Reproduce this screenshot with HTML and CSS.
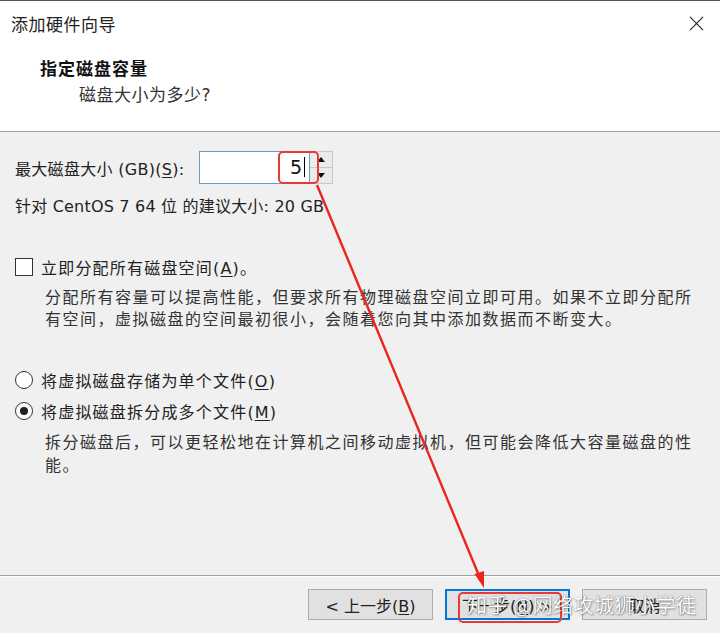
FILE: index.html
```html
<!DOCTYPE html>
<html lang="zh-CN">
<head>
    <meta charset="UTF-8">
    <title>添加硬件向导</title>
    <link rel="stylesheet" href="styles.css">
</head>
<body>
    <div class="window">
        <div class="titlebar">
            <span class="title">添加硬件向导</span>
            <svg class="close" width="16" height="16" viewBox="0 0 16 16">
                <path d="M1 1 L15 15 M15 1 L1 15" stroke="#222" stroke-width="1.2" fill="none"/>
            </svg>
        </div>
        <div class="header">
            <h1>指定磁盘容量</h1>
            <p>磁盘大小为多少?</p>
        </div>
        <div class="content">
            <div class="size_row">
                <label>最大磁盘大小 (GB)(<u>S</u>):</label>
                <div class="spin">
                    <div class="spin_input">5<span class="caret"></span></div>
                    <div class="spin_btns">
                        <div class="spin_btn"><span class="tri_up"></span></div>
                        <div class="spin_btn"><span class="tri_down"></span></div>
                    </div>
                </div>
            </div>
            <p class="recommend">针对 CentOS 7 64 位 的建议大小: 20 GB</p>
            <div class="option check_row">
                <span class="checkbox"></span>
                <span>立即分配所有磁盘空间(<u>A</u>)。</span>
            </div>
            <p class="desc">分配所有容量可以提高性能，但要求所有物理磁盘空间立即可用。如果不立即分配所有空间，虚拟磁盘的空间最初很小，会随着您向其中添加数据而不断变大。</p>
            <div class="option radio_first">
                <span class="radio"></span>
                <span>将虚拟磁盘存储为单个文件(<u>O</u>)</span>
            </div>
            <div class="option radio_second">
                <span class="radio checked"></span>
                <span>将虚拟磁盘拆分成多个文件(<u>M</u>)</span>
            </div>
            <p class="desc desc2">拆分磁盘后，可以更轻松地在计算机之间移动虚拟机，但可能会降低大容量磁盘的性能。</p>
        </div>
        <div class="footer">
            <button class="btn">&lt; 上一步(<u>B</u>)</button>
            <button class="btn btn_default">下一步(<u>N</u>) &gt;</button>
            <button class="btn">取消</button>
        </div>
    </div>

    <!-- 标注 -->
    <div class="mark mark_input"></div>
    <div class="mark mark_next"></div>
    <svg class="arrow" width="720" height="633" viewBox="0 0 720 633">
        <line x1="317" y1="185" x2="480" y2="578" stroke="#e8261c" stroke-width="2.4"/>
        <polygon points="484,588 474.5,574 484,571" fill="#e8261c"/>
    </svg>
    <div class="watermark">知乎 @网络攻城狮小学徒</div>
</body>
</html>
```

FILE: styles.css
```css
*{
    box-sizing: border-box;
}
body{
    margin: 0;
    width: 720px;
    height: 633px;
    overflow: hidden;
    position: relative;
    font-family: "DejaVu Sans", "Noto Sans CJK SC", sans-serif;
    font-size: 16px;
    color: #222;
    background-color: #f0f0f0;
}
u{
    text-decoration: underline;
    text-underline-offset: 2px;
}
.window{
    height: 633px;
    display: flex;
    flex-direction: column;
    border-top: 1px solid #555;
}
.titlebar{
    height: 45px;
    background-color: #fff;
    display: flex;
    align-items: center;
    justify-content: space-between;
    padding: 0 16px 0 11px;
}
.title{
    font-family: "Noto Sans CJK SC", sans-serif;
    font-size: 17px;
    letter-spacing: 0.5px;
    color: #222;
}
.close{
    width: 15px;
    height: 15px;
}
.header{
    height: 86px;
    background-color: #fff;
    border-bottom: 1px solid #a0a0a0;
    padding: 10px 0 0 40px;
}
.header h1{
    margin: 0;
    font-family: "Noto Sans CJK SC", sans-serif;
    font-size: 17px;
    line-height: 24px;
    font-weight: bold;
    letter-spacing: 1px;
    color: #111;
}
.header p{
    margin: 3px 0 0 39px;
    font-size: 17px;
    line-height: 24px;
    letter-spacing: 0.5px;
    color: #333;
}
.content{
    flex: 1;
    padding: 19px 0 0 15px;
}
.size_row{
    display: flex;
    align-items: center;
    height: 33px;
}
.size_row label{
    width: 184px;
    letter-spacing: 0.3px;
}
.spin{
    display: flex;
    height: 33px;
}
.spin_input{
    width: 111px;
    height: 33px;
    background-color: #fff;
    border: 1px solid #6f98c4;
    text-align: right;
    padding-right: 4px;
    line-height: 31px;
    font-size: 19px;
    color: #111;
}
.caret{
    display: inline-block;
    width: 1px;
    height: 20px;
    background-color: #000;
    margin-left: 2px;
    vertical-align: -3px;
}
.spin_btns{
    width: 23px;
    display: flex;
    flex-direction: column;
    border: 1px solid #c8c8c8;
    border-left: none;
}
.spin_btn{
    flex: 1;
    background-color: #ebebeb;
    display: flex;
    align-items: center;
    justify-content: center;
}
.spin_btn + .spin_btn{
    border-top: 1px solid #c8c8c8;
}
.tri_up{
    border: 4px solid transparent;
    border-bottom: 5px solid #111;
    border-top: none;
}
.tri_down{
    border: 4px solid transparent;
    border-top: 5px solid #111;
    border-bottom: none;
}
.recommend{
    margin: 12px 0 0;
    line-height: 22px;
    letter-spacing: 0.2px;
}
.option{
    display: flex;
    align-items: center;
    height: 22px;
    letter-spacing: 1.2px;
}
.check_row{
    margin-top: 38px;
}
.checkbox{
    width: 18px;
    height: 18px;
    border: 1px solid #333;
    background-color: #fff;
    margin-right: 8px;
}
.desc{
    margin: 9px 0 0 30px;
    width: 656px;
    line-height: 22px;
    letter-spacing: 1.5px;
    color: #333;
}
.radio_first{
    margin-top: 38px;
}
.radio_second{
    margin-top: 9px;
}
.radio{
    width: 18px;
    height: 18px;
    border: 1px solid #333;
    border-radius: 50%;
    background-color: #fff;
    margin-right: 8px;
    display: flex;
    align-items: center;
    justify-content: center;
}
.radio.checked::after{
    content: "";
    width: 8px;
    height: 8px;
    border-radius: 50%;
    background-color: #222;
}
.desc2{
    line-height: 23px;
}
.footer{
    height: 58px;
    border-top: 1px solid #a0a0a0;
    box-shadow: inset 0 1px 0 #fff;
    display: flex;
    justify-content: flex-end;
    gap: 12px;
    padding: 13px 13px 0 0;
}
.btn{
    width: 125px;
    height: 31px;
    background-color: #e1e1e1;
    border: 1px solid #adadad;
    font-family: "DejaVu Sans", "Noto Sans CJK SC", sans-serif;
    font-size: 16px;
    color: #222;
    padding: 0;
}
.btn_default{
    border: 2px solid #0078d7;
}
.mark{
    position: absolute;
    border: 2px solid #e53a35;
    border-radius: 5px;
}
.mark_input{
    left: 278px;
    top: 151px;
    width: 41px;
    height: 33px;
}
.mark_next{
    left: 458px;
    top: 592px;
    width: 104px;
    height: 31px;
}
.arrow{
    position: absolute;
    left: 0;
    top: 0;
}
.watermark{
    position: absolute;
    left: 467px;
    top: 591px;
    font-family: "Noto Sans CJK SC", sans-serif;
    font-size: 20px;
    line-height: 28px;
    letter-spacing: 0.5px;
    color: #fff;
    text-shadow: 0 0 1px rgba(0,0,0,0.6), 1px 1px 2px rgba(0,0,0,0.3);
}
```
